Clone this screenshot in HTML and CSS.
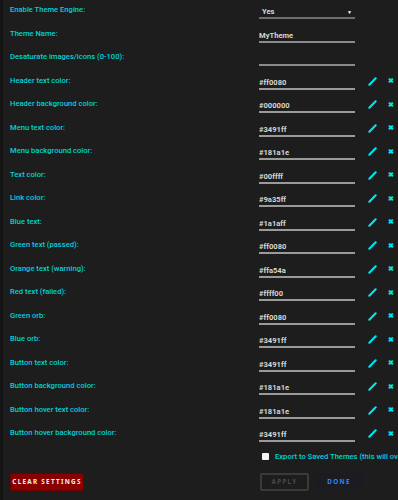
FILE: index.html
```html
<!DOCTYPE html>
<html>
<head>
<meta charset="utf-8">
<link rel="stylesheet" href="styles.css">
</head>
<body>
<div class="page">
  <div class="form">
    <div class="row">
      <label class="lbl">Enable Theme Engine:</label>
      <div class="field select"><span class="val">Yes</span><span class="caret">&#9660;</span></div>
    </div>
    <div class="row">
      <label class="lbl">Theme Name:</label>
      <div class="field"><span class="val">MyTheme</span></div>
    </div>
    <div class="row">
      <label class="lbl">Desaturate images/icons (0-100):</label>
      <div class="field"><span class="val"></span></div>
    </div>
    <div class="row color"><label class="lbl">Header text color:</label><div class="field"><span class="val">#ff0080</span></div><span class="pick"><svg viewBox="0 0 10 10"><path d="M1.5 8.5 L8.5 1.5"/></svg></span><span class="clr">&#10006;</span></div>
    <div class="row color"><label class="lbl">Header background color:</label><div class="field"><span class="val">#000000</span></div><span class="pick"><svg viewBox="0 0 10 10"><path d="M1.5 8.5 L8.5 1.5"/></svg></span><span class="clr">&#10006;</span></div>
    <div class="row color"><label class="lbl">Menu text color:</label><div class="field"><span class="val">#3491ff</span></div><span class="pick"><svg viewBox="0 0 10 10"><path d="M1.5 8.5 L8.5 1.5"/></svg></span><span class="clr">&#10006;</span></div>
    <div class="row color"><label class="lbl">Menu background color:</label><div class="field"><span class="val">#181a1e</span></div><span class="pick"><svg viewBox="0 0 10 10"><path d="M1.5 8.5 L8.5 1.5"/></svg></span><span class="clr">&#10006;</span></div>
    <div class="row color"><label class="lbl">Text color:</label><div class="field"><span class="val">#00ffff</span></div><span class="pick"><svg viewBox="0 0 10 10"><path d="M1.5 8.5 L8.5 1.5"/></svg></span><span class="clr">&#10006;</span></div>
    <div class="row color"><label class="lbl">Link color:</label><div class="field"><span class="val">#9a35ff</span></div><span class="pick"><svg viewBox="0 0 10 10"><path d="M1.5 8.5 L8.5 1.5"/></svg></span><span class="clr">&#10006;</span></div>
    <div class="row color"><label class="lbl">Blue text:</label><div class="field"><span class="val">#1a1aff</span></div><span class="pick"><svg viewBox="0 0 10 10"><path d="M1.5 8.5 L8.5 1.5"/></svg></span><span class="clr">&#10006;</span></div>
    <div class="row color"><label class="lbl">Green text (passed):</label><div class="field"><span class="val">#ff0080</span></div><span class="pick"><svg viewBox="0 0 10 10"><path d="M1.5 8.5 L8.5 1.5"/></svg></span><span class="clr">&#10006;</span></div>
    <div class="row color"><label class="lbl">Orange text (warning):</label><div class="field"><span class="val">#ffa54a</span></div><span class="pick"><svg viewBox="0 0 10 10"><path d="M1.5 8.5 L8.5 1.5"/></svg></span><span class="clr">&#10006;</span></div>
    <div class="row color"><label class="lbl">Red text (failed):</label><div class="field"><span class="val">#ffff00</span></div><span class="pick"><svg viewBox="0 0 10 10"><path d="M1.5 8.5 L8.5 1.5"/></svg></span><span class="clr">&#10006;</span></div>
    <div class="row color"><label class="lbl">Green orb:</label><div class="field"><span class="val">#ff0080</span></div><span class="pick"><svg viewBox="0 0 10 10"><path d="M1.5 8.5 L8.5 1.5"/></svg></span><span class="clr">&#10006;</span></div>
    <div class="row color"><label class="lbl">Blue orb:</label><div class="field"><span class="val">#3491ff</span></div><span class="pick"><svg viewBox="0 0 10 10"><path d="M1.5 8.5 L8.5 1.5"/></svg></span><span class="clr">&#10006;</span></div>
    <div class="row color"><label class="lbl">Button text color:</label><div class="field"><span class="val">#3491ff</span></div><span class="pick"><svg viewBox="0 0 10 10"><path d="M1.5 8.5 L8.5 1.5"/></svg></span><span class="clr">&#10006;</span></div>
    <div class="row color"><label class="lbl">Button background color:</label><div class="field"><span class="val">#181a1e</span></div><span class="pick"><svg viewBox="0 0 10 10"><path d="M1.5 8.5 L8.5 1.5"/></svg></span><span class="clr">&#10006;</span></div>
    <div class="row color"><label class="lbl">Button hover text color:</label><div class="field"><span class="val">#181a1e</span></div><span class="pick"><svg viewBox="0 0 10 10"><path d="M1.5 8.5 L8.5 1.5"/></svg></span><span class="clr">&#10006;</span></div>
    <div class="row color"><label class="lbl">Button hover background color:</label><div class="field"><span class="val">#3491ff</span></div><span class="pick"><svg viewBox="0 0 10 10"><path d="M1.5 8.5 L8.5 1.5"/></svg></span><span class="clr">&#10006;</span></div>
  </div>
  <div class="export">
    <span class="box"></span>
    <span class="export-text">Export to Saved Themes (this will overwrite)</span>
  </div>
  <div class="actions">
    <button class="btn clear">CLEAR SETTINGS</button>
    <div class="right">
      <button class="btn apply">APPLY</button>
      <button class="btn done">DONE</button>
    </div>
  </div>
</div>
</body>
</html>
```
FILE: styles.css
```css
html, body {
  margin: 0;
  padding: 0;
  background: #1d1d1d;
  overflow: hidden;
}
.page {
  width: 398px;
  height: 500px;
  box-sizing: border-box;
  border-left: 3px solid #141414;
  padding-left: 7px;
  font-family: Roboto, "Noto Sans", sans-serif;
  font-size: 7.6px;
  overflow: hidden;
}
.form {
  margin-top: -2px;
}
.row {
  display: grid;
  grid-template-columns: 249px 96px 22px 17px;
  height: 23.5px;
  align-items: center;
}
.lbl {
  color: #00d2da;
  font-weight: 500;
  white-space: nowrap;
}
.field {
  height: 11px;
  border-bottom: 2px solid #8a8a8a;
  display: flex;
  align-items: center;
  margin-top: 6px;
  color: #d6d6d6;
  font-weight: 700;
}
.select {
  padding-left: 3px;
  padding-right: 3px;
  justify-content: space-between;
  border-bottom-color: #6e6e6e;
}
.caret {
  font-size: 5px;
  color: #fff;
}
.color .field {
  border-bottom: 2px solid #9a9a9a;
}
.pick {
  display: flex;
  justify-content: flex-end;
  margin-top: 2px;
}
.pick svg {
  width: 9px;
  height: 9px;
  stroke: #00e5ee;
  stroke-width: 2.4;
  stroke-linecap: round;
  fill: none;
}
.clr {
  color: #00e5ee;
  font-size: 7px;
  text-align: right;
  font-weight: bold;
  margin-top: 2px;
}
.export {
  display: flex;
  align-items: center;
  margin-left: 252px;
  margin-top: 7px;
  white-space: nowrap;
  gap: 6px;
  width: 136px;
  overflow: hidden;
}
.box {
  width: 7px;
  height: 7px;
  background: #f4f4f4;
  border-radius: 1px;
  flex: none;
}
.export-text {
  color: #00d2da;
  font-weight: 500;
}
.actions {
  display: flex;
  margin-top: 12px;
  align-items: center;
}
.btn {
  font-family: "Noto Sans", "DejaVu Sans", sans-serif;
  font-size: 6.3px;
  font-weight: bold;
  letter-spacing: 1.3px;
  height: 18px;
  box-sizing: border-box;
  border-radius: 2px;
  cursor: pointer;
  padding: 0;
}
.clear {
  background: #8a0000;
  border: 1px solid #6a0000;
  color: #f2f2f2;
  width: 74px;
}
.right {
  display: flex;
  margin-left: 176px;
  gap: 6px;
}
.apply {
  width: 49px;
  background: transparent;
  border: 2px solid #3a3a3a;
  color: #4a4a4a;
}
.done {
  width: 48px;
  background: #1a1c21;
  border: none;
  color: #2f86f0;
}
```
